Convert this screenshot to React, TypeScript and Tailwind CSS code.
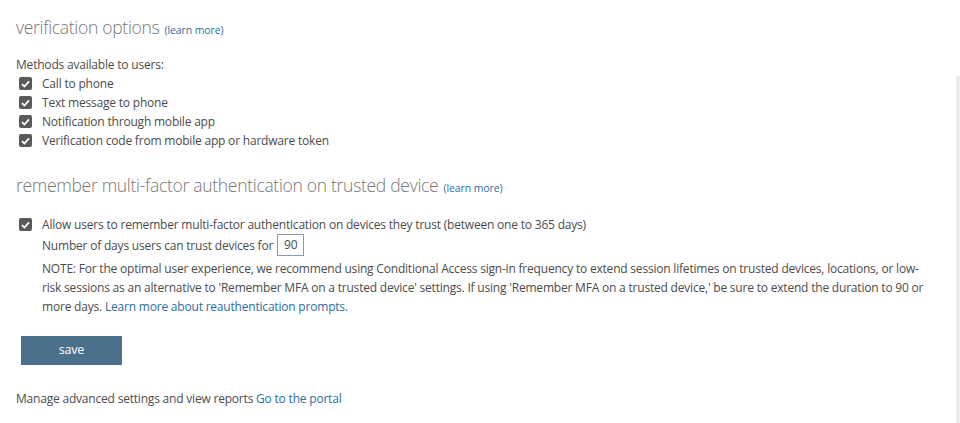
import React from "react";

const Check = () => (
  <span className="mt-[3px] flex h-[13px] w-[13px] shrink-0 items-center justify-center rounded-[2px] bg-[#5a5a5a]">
    <svg width="9" height="8" viewBox="0 0 9 8">
      <path d="M1 4.2 L3.4 6.5 L8 1.4" stroke="#fff" strokeWidth="1.8" fill="none" />
    </svg>
  </span>
);

export default function App() {
  const font = { fontFamily: '"Segoe UI", "Open Sans", sans-serif' };
  return (
    <div className="relative h-[423px] w-[960px] overflow-hidden bg-white text-[12px] tracking-[-0.2px] text-[#4c4c4c]" style={font}>
      <div className="absolute right-0 top-[76px] h-[347px] w-[4px] bg-[#ececec]" />
      <div className="px-4 pt-[14px]">
        <h2 className="flex items-baseline gap-[5px] text-[17.5px] font-light leading-[26px] tracking-[-0.3px] text-[#777]">
          verification options
          <a className="text-[10.5px] font-normal tracking-[-0.1px] text-[#2b6ea3]">(learn more)</a>
        </h2>
        <div className="mt-[12px] leading-[19px]">Methods available to users:</div>
        <div className="flex flex-col">
          {[
            "Call to phone",
            "Text message to phone",
            "Notification through mobile app",
            "Verification code from mobile app or hardware token",
          ].map((t) => (
            <div key={t} className="flex h-[19px] items-start gap-[10px] pl-[3px]">
              <Check />
              <span className="leading-[19px]">{t}</span>
            </div>
          ))}
        </div>
        <h2 className="mt-[22px] flex items-baseline gap-[5px] text-[17.5px] font-light leading-[26px] tracking-[-0.3px] text-[#777]">
          remember multi-factor authentication on trusted device
          <a className="text-[10.5px] font-normal tracking-[-0.1px] text-[#2b6ea3]">(learn more)</a>
        </h2>
        <div className="mt-[14px] flex items-start gap-[10px] pl-[3px]">
          <Check />
          <div className="flex flex-col leading-[19px]">
            <span>Allow users to remember multi-factor authentication on devices they trust (between one to 365 days)</span>
            <div className="flex items-center gap-[4px]">
              <span>Number of days users can trust devices for</span>
              <span className="flex h-[22px] w-[27px] items-center justify-center border border-[#8a9aa8] leading-none">90</span>
            </div>
            <div className="mt-[3px] whitespace-nowrap">
              <div>NOTE: For the optimal user experience, we recommend using Conditional Access sign-in frequency to extend session lifetimes on trusted devices, locations, or low-</div>
              <div>risk sessions as an alternative to 'Remember MFA on a trusted device' settings. If using 'Remember MFA on a trusted device,' be sure to extend the duration to 90 or</div>
              <div>more days. <a className="text-[#2b6ea3]">Learn more about reauthentication prompts.</a></div>
            </div>
          </div>
        </div>
        <button className="ml-[5px] mt-[20px] flex h-[29px] w-[101px] items-center justify-center bg-[#4a708c] text-[12.5px] text-white">
          save
        </button>
        <div className="mt-[24px] leading-[19px]">
          Manage advanced settings and view reports <a className="text-[#2b6ea3]">Go to the portal</a>
        </div>
      </div>
    </div>
  );
}
